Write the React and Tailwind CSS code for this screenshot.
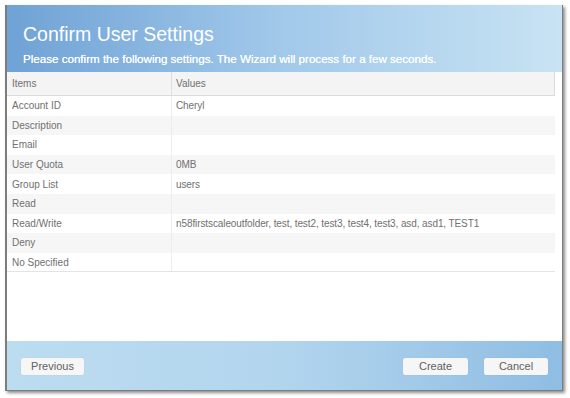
const rows = [
  ['Account ID', 'Cheryl'],
  ['Description', ''],
  ['Email', ''],
  ['User Quota', '0MB'],
  ['Group List', 'users'],
  ['Read', ''],
  ['Read/Write', 'n58firstscaleoutfolder, test, test2, test3, test4, test3, asd, asd1, TEST1'],
  ['Deny', ''],
  ['No Specified', ''],
];

function Button({ children, className = '' }) {
  return (
    <button className={`h-[17px] rounded-[2px] bg-[#f6f6f6] text-[11px] leading-[17px] text-[#606060] shadow-[0_0_1px_rgba(0,0,0,0.15)] ${className}`}>
      {children}
    </button>
  );
}

export default function App() {
  return (
    <div className="h-[398px] w-[570px] bg-white pl-[5px] pt-[5px]" style={{ fontFamily: '"Liberation Sans", Arial, sans-serif' }}>
      <div className="flex h-[386px] w-[558px] flex-col border-l-2 border-r border-b border-[#7d7d7d] bg-white shadow-[2px_2px_3px_rgba(0,0,0,0.45)]">
        <div className="h-[67px] shrink-0 bg-gradient-to-r from-[#6fa2d5] via-[#a2c9ea] to-[#c8e3f3] pl-[16px] pt-[17px] text-white">
          <div className="text-[19.5px] leading-[24px]">Confirm User Settings</div>
          <div className="mt-[6px] text-[11.6px] leading-[13px] text-white [text-shadow:0_0_0.6px_#fff]">
            Please confirm the following settings. The Wizard will process for a few seconds.
          </div>
        </div>
        <div className="flex flex-1 flex-col pr-[7px]">
          <div className="flex h-[24px] shrink-0 items-center border-b border-r border-[#dcdcdc] bg-[#f4f4f4] text-[10px] text-[#707070]">
            <div className="w-[164px] pl-[5px]">Items</div>
            <div className="flex h-full items-center border-l border-[#dedede] pl-[4px]">Values</div>
          </div>
          {rows.map(([k, v], i) => (
            <div key={k} className={`flex h-[19.6px] items-center text-[10px] text-[#707070] ${i % 2 ? 'bg-[#f6f6f6]' : 'bg-white'} ${i === rows.length - 1 ? 'border-b border-[#e4e4e4]' : ''}`}>
              <div className="w-[164px] pl-[5px]">{k}</div>
              <div className="flex h-full items-center border-l border-[#ececec] pl-[4px] tracking-[-0.1px]">{v}</div>
            </div>
          ))}
          <div className="flex-1" />
        </div>
        <div className="flex h-[49px] shrink-0 items-center bg-gradient-to-r from-[#bcdcf0] via-[#b2d5ee] to-[#8fbde3] px-[14px] pt-[2px]">
          <Button className="w-[63px]">Previous</Button>
          <div className="flex-1" />
          <Button className="w-[65px]">Create</Button>
          <Button className="ml-[16px] w-[64px]">Cancel</Button>
        </div>
      </div>
    </div>
  );
}
